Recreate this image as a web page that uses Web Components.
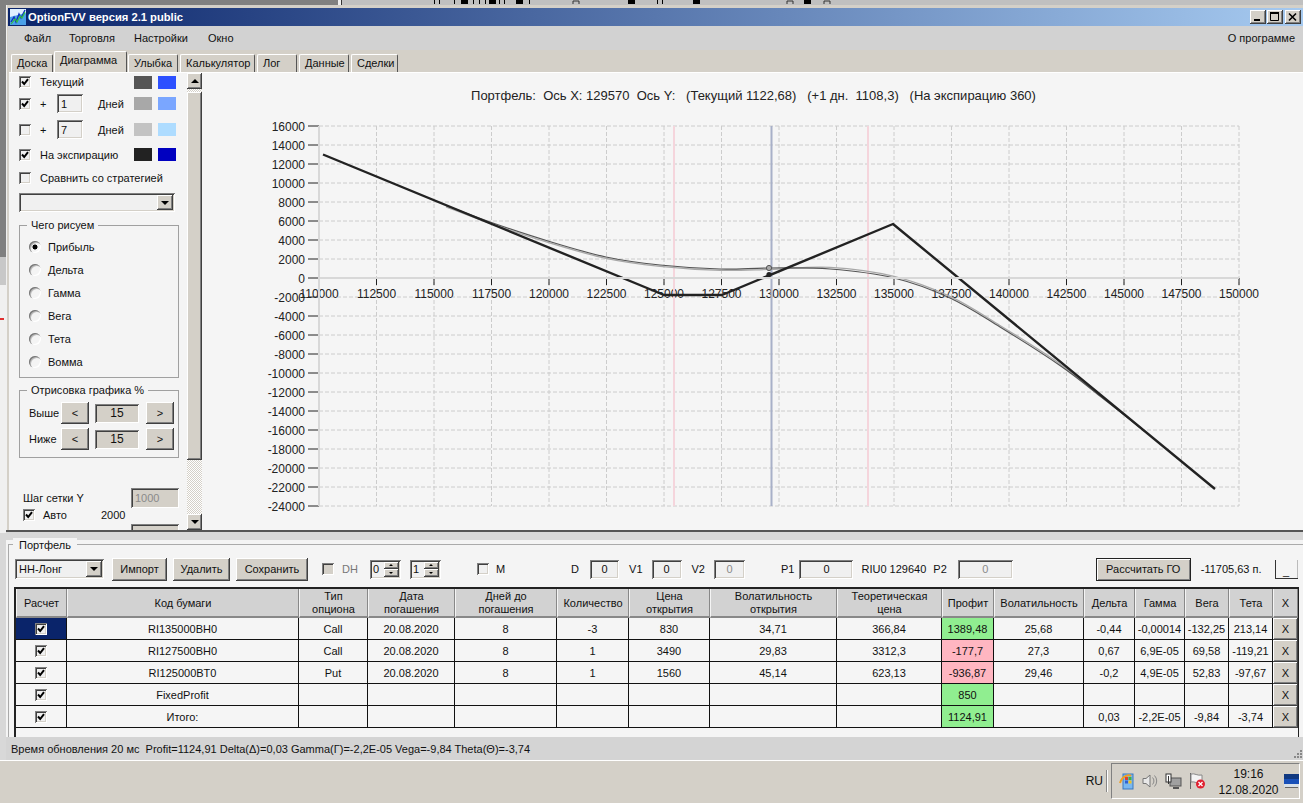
<!DOCTYPE html>
<html>
<head>
<meta charset="utf-8">
<title>OptionFVV</title>
<style>
html, body { margin: 0; height: 803px; overflow: hidden; }
body { font: 11px "Liberation Sans", Arial, sans-serif; color: #111; background: #d4d0c8; }
</style>
</head>
<body>
<option-app>
  <desk-strip slot="top"></desk-strip>
  <main-window slot="window">
    <title-bar slot="title">OptionFVV версия 2.1 public</title-bar>
    <menu-bar slot="menu"></menu-bar>
    <tab-strip slot="tabs"></tab-strip>
    <side-panel slot="side"></side-panel>
    <v-scroll slot="scroll"></v-scroll>
    <pnl-chart slot="chart"></pnl-chart>
    <portfolio-box slot="portfolio"></portfolio-box>
    <status-bar slot="status">Время обновления 20 мс&nbsp; Profit=1124,91 Delta(Δ)=0,03 Gamma(Γ)=-2,2E-05 Vega=-9,84 Theta(Θ)=-3,74</status-bar>
  </main-window>
  <task-bar slot="bottom"></task-bar>
</option-app>

<script>
const RAISED = "box-shadow: inset -1px -1px #404040, inset 1px 1px #fff, inset -2px -2px #808080, inset 2px 2px #d4d0c8;";
const SUNKEN = "box-shadow: inset 1px 1px #808080, inset -1px -1px #fff, inset 2px 2px #404040, inset -2px -2px #d4d0c8;";

// small helper: every element gets its own open shadow root
function define(name, html, setup) {
  const template = document.createElement("template");
  template.innerHTML = html;
  customElements.define(name, class extends HTMLElement {
    connectedCallback() {
      if (this.shadowRoot) return;
      const root = this.attachShadow({ mode: "open" });
      root.appendChild(template.content.cloneNode(true));
      if (setup) setup(root, this);
    }
  });
}

define("win-check", `
<style>
:host { display: inline-block; width: 12px; height: 12px; flex: none; }
div { width: 12px; height: 12px; background: #f0f0f0; ${SUNKEN} }
:host([disabled]) div { background: #d4d0c8; }
svg { display: block; }
</style>
<div><svg width="12" height="12" viewBox="0 0 12 12"></svg></div>`, (root, host) => {
  if (host.hasAttribute("checked")) {
    root.querySelector("svg").innerHTML = '<path d="M3 5.5 5.2 8 9 3.2" fill="none" stroke="#000" stroke-width="2"/>';
  }
});

define("win-radio", `
<style>
:host { display: block; width: 12px; height: 12px; flex: none; border-radius: 50%;
  background: #f4f4f4; box-shadow: inset 1px 1px #777, inset 2px 2px #bbb, inset -1px -1px #fff; }
:host([checked]) { background: radial-gradient(circle at 6px 6px, #000 2.2px, #f4f4f4 2.8px); }
</style>`);

define("win-button", `
<style>
:host { display: flex; align-items: center; justify-content: center; flex: none;
  box-sizing: border-box; background: #d4d0c8; color: #111; ${RAISED} }
</style><slot></slot>`);

define("win-field", `
<style>
:host { display: flex; align-items: center; justify-content: center; flex: none;
  box-sizing: border-box; background: #f0f0f0; color: #111; ${SUNKEN} }
:host([left]) { justify-content: flex-start; padding-left: 4px; }
:host([gray]) { background: #d4d0c8; }
:host([dim]) { color: #8a8a8a; }
</style><slot></slot>`);

define("win-arrow", `
<style>
:host { display: flex; align-items: center; justify-content: center; flex: none;
  box-sizing: border-box; background: #d4d0c8; ${RAISED} }
i { width: 0; height: 0; border: 4px solid transparent; }
:host([up]) i { border-top: 0; border-bottom: 4px solid #000; }
:host([down]) i { border-bottom: 0; border-top: 4px solid #000; }
:host([small]) i { border-width: 2px; }
:host([small][up]) i { border-top: 0; border-bottom-width: 2px; }
:host([small][down]) i { border-bottom: 0; border-top-width: 2px; }
</style><i></i>`);

define("win-combo", `
<style>
:host { display: flex; align-items: center; box-sizing: border-box; flex: none; background: #f0f0f0; padding: 2px 2px 2px 4px; ${SUNKEN} }
span { flex: 1; }
win-arrow { width: 16px; height: 100%; }
</style><span><slot></slot></span><win-arrow down></win-arrow>`);

define("win-spin", `
<style>
:host { display: flex; box-sizing: border-box; width: 31px; height: 19px; flex: none; padding: 2px; background: #f0f0f0; ${SUNKEN} }
span { flex: 1; padding-left: 1px; line-height: 15px; }
div { display: flex; flex-direction: column; width: 15px; }
win-arrow { flex: 1; }
</style><span><slot></slot></span><div><win-arrow up small></win-arrow><win-arrow down small></win-arrow></div>`);

define("group-box", `
<style>
:host { display: block; position: relative; box-sizing: border-box; width: 160px; border: 1px solid #a0a0a0; }
b { position: absolute; left: 7px; top: -8px; padding: 0 4px; font-weight: normal; background: #f4f4f4; line-height: 14px; white-space: nowrap; }
</style><b></b><slot></slot>`, (root, host) => {
  root.querySelector("b").textContent = host.getAttribute("label");
});

define("desk-strip", `
<style>
:host { display: block; height: 5px; background: #c0c0c0; }
svg { display: block; }
</style>
<svg width="1303" height="5" viewBox="0 0 1303 5">
  <rect width="338" height="5" fill="#808080"/>
  <rect x="338" width="3" height="5" fill="#eee"/><rect x="341" width="1" height="5" fill="#333"/>
  <g fill="#000">
    <rect x="434" width="1" height="4"/><rect x="439" width="1" height="4"/><rect x="454" width="1" height="4"/>
    <rect x="461" width="7" height="4"/><rect x="473" width="1" height="4"/><rect x="479" width="1" height="4"/>
    <rect x="485" width="1" height="4"/><rect x="489" width="7" height="4"/><rect x="499" width="1" height="4"/>
    <rect x="504" width="1" height="4"/><rect x="516" width="7" height="4"/><rect x="529" width="1" height="4"/>
    <rect x="628" width="7" height="4"/><rect x="657" width="1" height="4"/><rect x="662" width="1" height="4"/>
    <rect x="693" width="7" height="4"/><rect x="804" width="7" height="4"/>
  </g>
  <g fill="none" stroke="#333"><path d="M573 4V1H579V4M787 4V1H793V4M824 4V1H830V4"/></g>
</svg>`);

define("option-app", `
<style>
:host { display: flex; flex-direction: column; height: 803px; }
.mid { display: flex; height: 755px; }
.edge { width: 6px; flex: none; background:
  linear-gradient(#e03030, #e03030) 0 313px / 4px 2px no-repeat,
  linear-gradient(#808080 0 252px, #c8c8c8 252px 280px, #f0f0f0 280px 528px, #d8d8d8 528px); }
.win { flex: 1; min-width: 0; }
</style>
<slot name="top"></slot>
<div class="mid"><div class="edge"></div><div class="win"><slot name="window"></slot></div></div>
<slot name="bottom"></slot>`);

define("main-window", `
<style>
:host { display: flex; flex-direction: column; height: 755px; box-sizing: border-box; padding: 3px 0 0 2px;
  background: #d4d0c8; box-shadow: inset 1px 0 #f0f0f0; }
.body { display: flex; height: 458px; margin-left: 1px; border-top: 1px solid #fff; box-sizing: border-box; background: #f5f5f5; }
.split { height: 10px; margin-left: -2px; box-sizing: border-box; background: #d8d8d8; border-top: 2px solid #555; flex: none; }
</style>
<slot name="title"></slot>
<slot name="menu"></slot>
<slot name="tabs"></slot>
<div class="body">
  <slot name="side"></slot>
  <slot name="scroll"></slot>
  <slot name="chart"></slot>
</div>
<div class="split"></div>
<slot name="portfolio"></slot>
<slot name="status"></slot>`);

define("title-bar", `
<style>
:host { display: flex; align-items: center; height: 18px; flex: none; color: #fff; font-weight: bold; font-size: 11.2px;
  background: linear-gradient(90deg, #0a246a, #a6caf0); }
svg { margin: 0 2px 0 2px; flex: none; }
span { flex: 1; }
.btns { display: flex; align-items: center; margin-right: 1px; }
win-button { width: 16px; height: 14px; margin-right: 1px; color: #000; }
win-button:nth-child(2) { margin-right: 2px; }
</style>
<svg width="16" height="16" viewBox="0 0 16 16">
  <rect width="16" height="16" fill="#4aa0e8"/>
  <path d="M0 0h16v4L0 8z" fill="#dff0ff"/>
  <path d="M1 13 4 8l2 5 3-8 2 4 4-8" fill="none" stroke="#1030c0" stroke-width="1.4"/>
  <path d="M1 15 5 10l2 3 3-6 2 2 3-6" fill="none" stroke="#30c040" stroke-width="1.2"/>
</svg>
<span><slot></slot></span>
<div class="btns">
  <win-button><svg width="10" height="10" viewBox="0 0 10 10" style="margin:0"><rect x="1" y="7" width="6" height="2" fill="#000"/></svg></win-button>
  <win-button><svg width="10" height="10" viewBox="0 0 10 10" style="margin:0"><path d="M0.5 1.5h8v7h-8z M0.5 1h8" fill="none" stroke="#000"/><rect y="0" width="9" height="2" fill="#000"/></svg></win-button>
  <win-button><svg width="10" height="10" viewBox="0 0 10 10" style="margin:0"><path d="M1 1.5 8 8.5M8 1.5 1 8.5" stroke="#000" stroke-width="1.6"/></svg></win-button>
</div>`);

define("menu-bar", `
<style>
:host { display: flex; align-items: center; height: 24px; flex: none; padding: 0 8px 0 16px; background: #d2d2d2; }
.file { width: 45px; }
.trade { width: 65px; }
.set { width: 74px; }
.win { flex: 1; }
</style>
<span class="file">Файл</span><span class="trade">Торговля</span><span class="set">Настройки</span><span class="win">Окно</span><span>О программе</span>`);

define("tab-strip", `
<style>
:host { display: flex; align-items: flex-end; height: 22px; flex: none; padding-left: 3px; background: #d4d0c8; box-sizing: border-box; }
span { box-sizing: border-box; height: 18px; line-height: 17px; padding-left: 5px; margin-right: 2px; flex: none; white-space: nowrap;
  border-left: 1px solid #fff; border-top: 1px solid #fff; border-right: 1px solid #555; border-radius: 2px 2px 0 0; }
span.first { margin-right: 1px; }
span.on { height: 21px; line-height: 17px; margin-right: 1px; background: #d8d4cc; }
</style>`, (root) => {
  [["Доска", 42], ["Диаграмма", 73], ["Улыбка", 50], ["Калькулятор", 75], ["Лог", 40], ["Данные", 50], ["Сделки", 47]].forEach(([t, w], i) => {
    const s = document.createElement("span");
    s.textContent = t;
    s.style.width = w + "px";
    if (i === 0) s.className = "first";
    if (i === 1) s.className = "on";
    root.appendChild(s);
  });
});

define("side-panel", `
<style>
:host { display: block; width: 178px; flex: none; height: 457px; overflow: hidden; box-sizing: border-box; padding-left: 10px; background: #f4f4f4; }
.row { display: flex; align-items: center; white-space: nowrap; }
.chk { margin-right: 9px; }
.name { width: 94px; }
.sw { width: 18px; height: 13px; margin-right: 6px; flex: none; }
.plus { width: 17px; }
.days { width: 36px; margin-left: 15px; }
win-field { width: 26px; height: 19px; }
group-box { margin-top: 13px; }
.radios { display: flex; flex-direction: column; gap: 11px; padding: 15px 0 0 9px; }
.radios .row { height: 12px; }
.radios win-radio { margin-right: 7px; }
.g2 { padding: 11px 0 0 9px; }
.g2 .row { height: 22px; margin-bottom: 4px; }
.g2 span { width: 32px; }
.g2 win-button { width: 28px; height: 22px; }
.g2 win-field { width: 44px; height: 19px; margin: 0 7px 0 6px; }
.grid { margin-left: 4px; }
.grid win-field { width: 48px; height: 20px; }
</style>
<div class="row" style="height:18px"><win-check class="chk" checked></win-check><span class="name">Текущий</span><i class="sw" style="background:#555"></i><i class="sw" style="background:#2d50ff"></i></div>
<div class="row" style="height:19px;margin-top:3px"><win-check class="chk" checked></win-check><span class="plus">+</span><win-field left>1</win-field><span class="days">Дней</span><i class="sw" style="background:#a8a8a8"></i><i class="sw" style="background:#7aa6ff"></i></div>
<div class="row" style="height:19px;margin-top:7px"><win-check class="chk"></win-check><span class="plus">+</span><win-field left>7</win-field><span class="days">Дней</span><i class="sw" style="background:#c3c3c3"></i><i class="sw" style="background:#aedcff"></i></div>
<div class="row" style="height:19px;margin-top:6px"><win-check class="chk" checked></win-check><span class="name">На экспирацию</span><i class="sw" style="background:#222"></i><i class="sw" style="background:#0000c0"></i></div>
<div class="row" style="height:18px;margin-top:5px"><win-check class="chk"></win-check><span>Сравнить со стратегией</span></div>
<win-combo style="width:156px;height:19px;margin-top:6px"></win-combo>
<group-box label="Чего рисуем" style="height:153px">
  <div class="radios">
    <div class="row"><win-radio checked></win-radio>Прибыль</div>
    <div class="row"><win-radio></win-radio>Дельта</div>
    <div class="row"><win-radio></win-radio>Гамма</div>
    <div class="row"><win-radio></win-radio>Вега</div>
    <div class="row"><win-radio></win-radio>Тета</div>
    <div class="row"><win-radio></win-radio>Вомма</div>
  </div>
</group-box>
<group-box label="Отрисовка графика %" style="height:68px;margin-top:12px">
  <div class="g2">
    <div class="row"><span>Выше</span><win-button>&lt;</win-button><win-field gray style="font-size:12px">15</win-field><win-button>&gt;</win-button></div>
    <div class="row"><span>Ниже</span><win-button>&lt;</win-button><win-field gray style="font-size:12px">15</win-field><win-button>&gt;</win-button></div>
  </div>
</group-box>
<div class="grid">
  <div class="row" style="height:20px;margin-top:30px"><span style="width:108px">Шаг сетки Y</span><win-field gray dim left>1000</win-field></div>
  <div class="row" style="height:14px"><win-check style="margin-right:8px" checked></win-check><span style="width:58px">Авто</span>2000</div>
  <div class="row" style="height:20px;margin-top:2px"><span style="width:108px">Шаг сетки X</span><win-field gray dim left>2500</win-field></div>
</div>`);

define("v-scroll", `
<style>
:host { display: flex; flex-direction: column; width: 15px; height: 457px; flex: none; box-sizing: border-box;
  background: repeating-conic-gradient(#fff 0 25%, #d4d0c8 0 50%) 0 0 / 2px 2px; }
.up { height: 16px; }
.gap { height: 3px; }
.thumb { height: 368px; background: #d4d0c8; ${RAISED} flex: none; }
.track { flex: 1; }
.dn { height: 16px; }
</style>
<win-arrow class="up" up></win-arrow><div class="gap"></div><div class="thumb"></div><div class="track"></div><win-arrow class="dn" down></win-arrow>`);

define("pnl-chart", `
<style>
:host { display: block; flex: 1; min-width: 0; background: #f5f5f5; overflow: hidden; }
svg { display: block; font: 12px "Liberation Sans", Arial, sans-serif; fill: #222; }
</style>
<svg width="1101" height="457" viewBox="202 73 1101 457"></svg>`, (root) => {
  const X0 = 319, DX = 57.5, Y0 = 126, DY = 19, XN = 16, YN = 20;
  const right = X0 + XN * DX, bottom = Y0 + YN * DY;
  const zero = Y0 + 8 * DY;
  let s = "";
  // grid
  for (let i = 0; i <= YN; i++) {
    const y = Y0 + i * DY;
    s += `<line x1="${X0}" x2="${right}" y1="${y}" y2="${y}" stroke="#ccc" stroke-dasharray="4 2"/>`;
    s += `<line x1="308" x2="${X0}" y1="${y}" y2="${y}" stroke="#222" stroke-width="1"/>`;
    s += `<text x="305" y="${y + 4.5}" text-anchor="end">${16000 - i * 2000}</text>`;
  }
  for (let i = 0; i <= XN; i++) {
    const x = X0 + i * DX;
    if (i) s += `<line x1="${x}" x2="${x}" y1="${Y0}" y2="${bottom}" stroke="#ccc" stroke-dasharray="4 2"/>`;
    s += `<line x1="${x}" x2="${x}" y1="${zero}" y2="${zero + 7}" stroke="#222"/>`;
    s += `<text x="${x}" y="${zero + 20}" text-anchor="middle">${110000 + i * 2500}</text>`;
  }
  // strikes and current price
  s += `<line x1="674" x2="674" y1="${Y0}" y2="${bottom}" stroke="#f5d5dc" stroke-width="2"/>`;
  s += `<line x1="868" x2="868" y1="${Y0}" y2="${bottom}" stroke="#f5d5dc" stroke-width="2"/>`;
  s += `<line x1="771.5" x2="771.5" y1="${Y0}" y2="${bottom}" stroke="#a8b0c8" stroke-width="2"/>`;

  const smooth = (p) => {
    let d = `M${p[0][0]} ${p[0][1]}`;
    for (let i = 0; i < p.length - 1; i++) {
      const a = p[i - 1] || p[i], b = p[i], c = p[i + 1], e = p[i + 2] || c;
      d += `C${b[0] + (c[0] - a[0]) / 6} ${b[1] + (c[1] - a[1]) / 6} ${c[0] - (e[0] - b[0]) / 6} ${c[1] - (e[1] - b[1]) / 6} ${c[0]} ${c[1]}`;
    }
    return d;
  };
  const current = [[446, 205.5], [490, 222], [548, 241], [606, 257], [660, 265], [720, 269], [770, 268], [830, 269], [894, 278], [950, 298], [1000, 327], [1060, 365.5], [1100, 396], [1125, 415.5], [1145, 431.5]];
  const dayMore = current.map(([x, y]) => [x, y + (x < 800 ? 1.4 : x > 1060 ? 0 : -1.6)]);
  s += `<path d="${smooth(dayMore)}" fill="none" stroke="#a8a8a8" stroke-width="1.2"/>`;
  s += `<path d="${smooth(current)}" fill="none" stroke="#555" stroke-width="1.2"/>`;
  s += `<polyline points="323,154.5 664,295 722,295 893,224 1215,489" fill="none" stroke="#222" stroke-width="2.4" stroke-linejoin="round"/>`;
  // axes lie over the lines
  s += `<line x1="${X0}" x2="${right}" y1="${zero}" y2="${zero}" stroke="#d8d8d8" stroke-width="2"/>`;
  s += `<line x1="${X0}" x2="${X0}" y1="${Y0}" y2="${bottom}" stroke="#d8d8d8" stroke-width="2"/>`;
  s += `<circle cx="769" cy="268" r="2.6" fill="#aaa" stroke="#555"/>`;
  s += `<circle cx="769" cy="274.5" r="2.6" fill="#222"/>`;
  s += `<text x="753.5" y="100" text-anchor="middle" xml:space="preserve" style="font-size:13px">Портфель:  Ось X: 129570  Ось Y:   (Текущий 1122,68)   (+1 дн.  1108,3)   (На экспирацию 360)</text>`;
  root.querySelector("svg").innerHTML = s;
});

define("portfolio-box", `
<style>
:host { display: block; position: relative; height: 197px; flex: none; margin-left: -2px; box-sizing: border-box; background: #f4f4f4; padding-top: 17px; }
.frame { position: absolute; left: 2px; right: 0; top: 4px; bottom: 0; border-top: 1px solid #aaa; border-left: 1px solid #aaa; }
.legend { position: absolute; left: 7px; top: -2px; padding: 0 6px; background: #f4f4f4; line-height: 14px; }
.bar { position: relative; display: flex; align-items: center; height: 24px; padding-left: 9px; white-space: nowrap; }
.bar > * { flex: none; }
.bar .go { box-shadow: inset 0 0 0 1px #222, inset 2px 2px #fff, inset -2px -2px #808080; }
.bar .dash { background: #f4f4f4; box-shadow: inset 1px -1px #333, inset -1px 0 #bbb; align-items: flex-end; padding-bottom: 2px; line-height: 11px; }
portfolio-table { position: relative; margin: 6px 0 0 8px; }
</style>
<div class="frame"></div><div class="legend">Портфель</div>
<div class="bar">
  <win-combo left style="width:89px;height:20px">НН-Лонг</win-combo>
  <win-button style="width:55px;height:23px;margin-left:8px">Импорт</win-button>
  <win-button style="width:57px;height:23px;margin-left:6px">Удалить</win-button>
  <win-button style="width:72px;height:23px;margin-left:6px">Сохранить</win-button>
  <win-check disabled style="margin-left:14px"></win-check>
  <span style="margin-left:8px;color:#777">DH</span>
  <win-spin style="margin-left:12px">0</win-spin>
  <win-spin style="margin-left:9px">1</win-spin>
  <win-check style="margin-left:36px"></win-check>
  <span style="margin-left:7px">M</span>
  <span style="margin-left:66px;width:18px">D</span>
  <win-field style="width:29px;height:19px;margin-left:1px">0</win-field>
  <span style="margin-left:10px">V1</span>
  <win-field style="width:30px;height:19px;margin-left:9px">0</win-field>
  <span style="margin-left:10px">V2</span>
  <win-field dim style="width:31px;height:19px;margin-left:9px">0</win-field>
  <span style="margin-left:36px">P1</span>
  <win-field style="width:54px;height:19px;margin-left:5px">0</win-field>
  <span style="margin-left:8px">RIU0 129640</span>
  <span style="margin-left:7px">P2</span>
  <win-field dim style="width:55px;height:19px;margin-left:11px">0</win-field>
  <win-button class="go" style="width:95px;height:23px;margin-left:83px">Рассчитать ГО</win-button>
  <span style="margin-left:10px">-11705,63 п.</span>
  <win-button class="dash" style="width:23px;height:19px;margin-left:13px">_</win-button>
</div>
<portfolio-table></portfolio-table>`);

define("portfolio-table", `
<style>
:host { display: block; width: 1285px; height: 150px; box-sizing: border-box; overflow: hidden; background: #f5f5f5;
  border-top: 2px solid #222; border-left: 2px solid #222; border-right: 1px solid #222; }
table { table-layout: fixed; border-collapse: separate; border-spacing: 0; width: 1282px; font: inherit; }
th, td { box-sizing: border-box; text-align: center; padding: 0; overflow: hidden; white-space: nowrap; }
th { height: 29px; padding-top: 1px; font-weight: normal; line-height: 13px; background: #d2d2d2; border-left: 1px solid #f4f4f4; border-right: 1px solid #888; border-bottom: 2px solid #888; }
td { height: 22px; border-right: 1px solid #111; border-bottom: 1px solid #111; background: #f5f5f5; }
td.sel { background: #0a246a; }
td.up { background: #90ee90; }
td.dn { background: #ffb6c1; }
td win-check { vertical-align: middle; }
td.x { border-right: 0; border-bottom: 0; }
td.x win-button { height: 22px; width: 100%; }
</style>
<table><colgroup></colgroup><thead><tr></tr></thead><tbody></tbody></table>`, (root) => {
  const widths = [51, 232, 69, 87, 102, 72, 81, 127, 105, 52, 90, 51, 50, 44, 44, 25];
  const heads = ["Расчет", "Код бумаги", "Тип<br>опциона", "Дата<br>погашения", "Дней до<br>погашения", "Количество", "Цена<br>открытия", "Волатильность<br>открытия", "Теоретическая<br>цена", "Профит", "Волатильность", "Дельта", "Гамма", "Вега", "Тета", "X"];
  const rows = [
    ["RI135000BH0", "Call", "20.08.2020", "8", "-3", "830", "34,71", "366,84", "1389,48", "25,68", "-0,44", "-0,00014", "-132,25", "213,14"],
    ["RI127500BH0", "Call", "20.08.2020", "8", "1", "3490", "29,83", "3312,3", "-177,7", "27,3", "0,67", "6,9E-05", "69,58", "-119,21"],
    ["RI125000BT0", "Put", "20.08.2020", "8", "1", "1560", "45,14", "623,13", "-936,87", "29,46", "-0,2", "4,9E-05", "52,83", "-97,67"],
    ["FixedProfit", "", "", "", "", "", "", "", "850", "", "", "", "", ""],
    ["Итого:", "", "", "", "", "", "", "", "1124,91", "", "0,03", "-2,2E-05", "-9,84", "-3,74"],
  ];
  root.querySelector("colgroup").innerHTML = widths.map((w) => `<col style="width:${w}px">`).join("");
  root.querySelector("thead tr").innerHTML = heads.map((h) => `<th>${h}</th>`).join("");
  root.querySelector("tbody").innerHTML = rows.map((r, i) => {
    const cells = r.map((v, c) => {
      const cls = c === 8 ? (v.startsWith("-") ? "dn" : "up") : "";
      return `<td class="${cls}">${v}</td>`;
    }).join("");
    return `<tr><td class="${i ? "" : "sel"}"><win-check checked></win-check></td>${cells}<td class="x"><win-button>X</win-button></td></tr>`;
  }).join("");
});

define("status-bar", `
<style>
:host { display: flex; align-items: center; height: 23px; flex: none; margin-left: -2px; padding-left: 5px; background: #d4d4d4; white-space: nowrap; }
span { flex: 1; }
svg { align-self: flex-end; margin-bottom: 1px; }
</style><span><slot></slot></span>
<svg width="10" height="10" viewBox="0 0 10 10" fill="#888"><rect x="7" y="1" width="2" height="2"/><rect x="4" y="4" width="2" height="2"/><rect x="7" y="4" width="2" height="2"/><rect x="1" y="7" width="2" height="2"/><rect x="4" y="7" width="2" height="2"/><rect x="7" y="7" width="2" height="2"/></svg>`);

define("task-bar", `
<style>
:host { display: flex; align-items: center; justify-content: flex-end; height: 43px; box-sizing: border-box; background: #d4d0c8; border-top: 1px solid #fff; padding: 0 3px 2px 0; font-size: 12px; }
.sep { width: 0; height: 22px; margin: 0 3px 0 3px; border-left: 1px solid #888; border-right: 1px solid #fff; }
.tray { display: flex; align-items: center; box-sizing: border-box; width: 189px; height: 36px; border: 1px solid; border-color: #808080 #fff #fff #808080; padding-left: 7px; }
svg { flex: none; display: block; margin-right: 7px; }
.clock { width: 76px; text-align: center; line-height: 16px; padding-top: 1px; }
</style>
<span>RU</span><div class="sep"></div>
<div class="tray">
  <svg width="16" height="17" viewBox="0 0 16 17"><rect x="4" y="1" width="10" height="15" fill="#7ab8f0" stroke="#3a78c0"/><path d="M1 10C3 3 10 1 12 3" fill="none" stroke="#f0a020" stroke-width="2"/><rect x="6" y="4" width="3" height="3" fill="#e04030"/><rect x="9.5" y="4" width="3" height="3" fill="#40b040"/><rect x="6" y="7.5" width="3" height="3" fill="#3060d0"/><rect x="9.5" y="7.5" width="3" height="3" fill="#f0c020"/></svg>
  <svg width="16" height="16" viewBox="0 0 16 16"><path d="M1 5.5h3L8 2v12L4 10.5H1z" fill="#e8e8e8" stroke="#777"/><path d="M10.5 4.5a5 5 0 0 1 0 7M12.5 2.5a8 8 0 0 1 0 11" fill="none" stroke="#888"/></svg>
  <svg width="17" height="17" viewBox="0 0 17 17"><rect x="5" y="5" width="11" height="8" fill="#a0a0a0" stroke="#555"/><rect x="1" y="1" width="5" height="8" fill="#fff" stroke="#333"/><path d="M3.5 3v8" stroke="#333"/><path d="M8 15h6" stroke="#555" stroke-width="2"/></svg>
  <svg width="17" height="18" viewBox="0 0 17 18"><path d="M1.5 1v16" stroke="#666"/><path d="M2 2c4-1 6 2 11 1v8c-5 1-7-2-11-1z" fill="#f4f4f4" stroke="#888"/><circle cx="11.5" cy="12" r="4.5" fill="#e02030"/><path d="M9.5 10l4 4M13.5 10l-4 4" stroke="#fff" stroke-width="1.3"/></svg>
  <div class="clock"><div>19:16</div><div>12.08.2020</div></div>
  <svg width="15" height="15" viewBox="0 0 15 15" style="margin:0"><rect width="15" height="13" fill="#1850b8"/><rect width="15" height="5" fill="#103880"/><rect y="10" width="15" height="3" fill="#d8e0e8"/><rect x="1" y="13" width="13" height="1" fill="#666"/></svg>
</div>`);
</script>
</body>
</html>
